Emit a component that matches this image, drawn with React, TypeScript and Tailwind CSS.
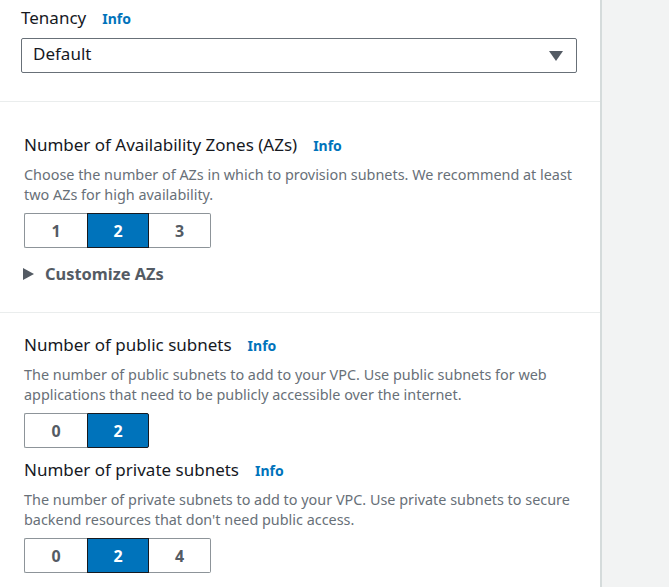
import React from "react";

const font = { fontFamily: '"Noto Sans", "Open Sans", Arial, sans-serif' };

function Seg({ items, selected }: { items: string[]; selected: number }) {
  return (
    <div className="flex">
      {items.map((it, i) => {
        const sel = i === selected;
        const first = i === 0;
        const last = i === items.length - 1;
        return (
          <div
            key={i}
            className={
              "w-[62px] h-[35px] flex items-center justify-center text-[16px] font-bold border " +
              (sel
                ? "bg-[#0073bb] border-[#16191f] text-white"
                : "bg-white border-[#8d9499] text-[#545b64]") +
              (first ? " rounded-l-[2px] w-[63px]" : "") +
              (last ? " rounded-r-[2px]" : "") +
              (!first && i - 1 === selected ? " border-l-0" : "") +
              (!last && i + 1 === selected ? " border-r-0" : "")
            }
          >
            {it}
          </div>
        );
      })}
    </div>
  );
}

function Title({ text }: { text: string }) {
  return (
    <div className="flex items-baseline h-[22px] leading-[22px]">
      <span className="text-[17px] text-[#16191f]">{text}</span>
      <span className="ml-[16px] text-[14px] font-bold text-[#0073bb]">Info</span>
    </div>
  );
}

function Desc({ children }: { children: React.ReactNode }) {
  return <div className="text-[14.4px] leading-[20px] text-[#687078] pr-[20px]">{children}</div>;
}

export default function App() {
  return (
    <div className="flex w-[669px] h-[587px] overflow-hidden bg-[#f2f3f3]" style={font}>
      <div className="w-[602px] shrink-0 bg-white border-r-2 border-[#d5dbdb] flex flex-col">
        <div className="pl-[21px] pr-[24px] pt-[7px] h-[102px] border-b border-[#eaeded]">
          <Title text="Tenancy" />
          <div className="mt-[9px] h-[35px] w-[556px] border border-[#687078] rounded-[2px] flex items-center justify-between pl-[11px] pr-[13px]">
            <span className="text-[17px] text-[#16191f] leading-[22px] pb-[3px]">Default</span>
            <svg width="14" height="10" viewBox="0 0 14 10">
              <polygon points="0,0 14,0 7,10" fill="#545b64" />
            </svg>
          </div>
        </div>
        <div className="pl-[24px] pt-[32px] h-[211px] border-b border-[#eaeded]">
          <Title text="Number of Availability Zones (AZs)" />
          <div className="mt-[9px]">
            <Desc>
              Choose the number of AZs in which to provision subnets. We recommend at least two AZs for high availability.
            </Desc>
          </div>
          <div className="mt-[8px]">
            <Seg items={["1", "2", "3"]} selected={1} />
          </div>
          <div className="mt-[15px] flex items-center h-[22px]">
            <svg width="11" height="12" viewBox="0 0 11 12" className="ml-[-1px]">
              <polygon points="0,0 11,6 0,12" fill="#545b64" />
            </svg>
            <span className="ml-[11px] text-[16.4px] font-bold text-[#545b64]">Customize AZs</span>
          </div>
        </div>
        <div className="pl-[24px] pt-[21px]">
          <Title text="Number of public subnets" />
          <div className="mt-[9px]">
            <Desc>
              The number of public subnets to add to your VPC. Use public subnets for web applications that need to be publicly accessible over the internet.
            </Desc>
          </div>
          <div className="mt-[8px]">
            <Seg items={["0", "2"]} selected={1} />
          </div>
          <div className="mt-[11px]">
            <Title text="Number of private subnets" />
          </div>
          <div className="mt-[9px]">
            <Desc>
              The number of private subnets to add to your VPC. Use private subnets to secure backend resources that don't need public access.
            </Desc>
          </div>
          <div className="mt-[8px]">
            <Seg items={["0", "2", "4"]} selected={1} />
          </div>
        </div>
      </div>
      <div className="flex-1" />
    </div>
  );
}
